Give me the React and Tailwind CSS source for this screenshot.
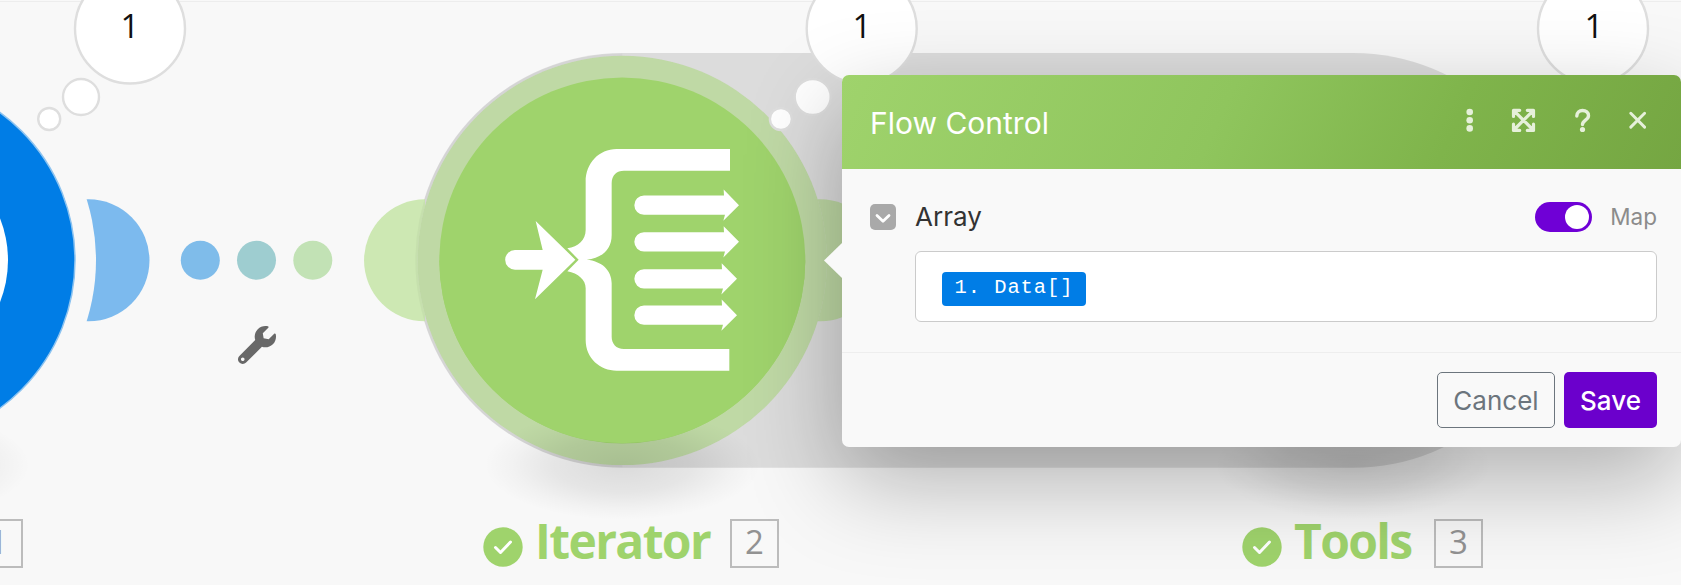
import { FaWrench } from 'react-icons/fa';

const GREEN = '#9fd36c';

function ThoughtBubble({ x }) {
  return (
    <g fill="#fff" stroke="#dedede" strokeWidth="2.4">
      <circle cx={x} cy="28.5" r="55" />
      <circle cx={x - 49} cy="97" r="18" />
      <circle cx={x - 80.8} cy="119" r="11" />
    </g>
  );
}

function SmallArrow({ y, dx }) {
  return (
    <path
      d={`M492 ${y - 29}H${732 + dx}L${731 + dx} ${y - 47}L${777 + dx} ${y}L${730 + dx} ${y + 47}L${735 + dx} ${y + 29}H492a29 29 0 0 1 0-58z`}
    />
  );
}

function Canvas() {
  return (
    <svg className="absolute inset-0" width="1681" height="585" viewBox="0 0 1681 585">
      <defs>
        <radialGradient id="soft">
          <stop offset="0" stopColor="#000" stopOpacity="0.12" />
          <stop offset="0.5" stopColor="#000" stopOpacity="0.075" />
          <stop offset="0.8" stopColor="#000" stopOpacity="0.025" />
          <stop offset="1" stopColor="#000" stopOpacity="0" />
        </radialGradient>
      </defs>
      <rect y="1" width="1681" height="1" fill="#ededed" />

      <circle cx="88.5" cy="260.3" r="61" fill="#7cbaee" />
      <circle cx="-108" cy="260.3" r="204" fill="#f8f8f8" />
      <circle cx="-108" cy="260.3" r="183" fill="#007de6" stroke="#8cc3f0" strokeWidth="1.5" />
      <circle cx="-106" cy="260.3" r="114" fill="#fff" />

      <circle cx="200.3" cy="260.3" r="19.5" fill="#7fbcea" />
      <circle cx="256.5" cy="260.3" r="19.5" fill="#9ecdd0" />
      <circle cx="312.8" cy="260.3" r="19.5" fill="#c2e2b5" />

      <rect x="415" y="53" width="1146" height="414.7" rx="207.3" fill="#000" fillOpacity="0.11" />
      <path d="M425 199.300a61 61 0 0 0 0 122z" fill="#cde8b3" />
      <path d="M622.300 53.400a207 207 0 0 0 0 414z" fill="#000" fillOpacity="0.03" />
      <circle cx="820" cy="260.3" r="61" fill={GREEN} fillOpacity="0.5" />
      <circle cx="622.3" cy="260.4" r="204.700" fill="#dedede" />
      <circle cx="622.3" cy="260.4" r="204.700" fill={GREEN} fillOpacity="0.5" />
      <circle cx="622.3" cy="260.4" r="183" fill={GREEN} />

      <ellipse cx="-108" cy="465" rx="138" ry="55" fill="url(#soft)" />
      <ellipse cx="622.3" cy="465" rx="138" ry="55" fill="url(#soft)" />
      <ellipse cx="1353" cy="465" rx="138" ry="55" fill="url(#soft)" />
      <path d="M439.300 260.400a183 183 0 0 0 366 0z" fill={GREEN} />

      <g transform="translate(480 130) scale(.33333)" fill="#fff">
        <path d="M750 57H410C357 57 317 100 317 155V300C317 330 295 350 262 355L296 389L262 424C295 430 317 450 317 475V630C317 685 360 722 410 722H748V657H432C408 657 395 640 395 620V460C395 420 365 393 320 389C365 384 395 360 395 315V160C395 135 410 122 432 122H750z" />
        <path d="M105 360H188L167 273L286 389L165 508L188 419H105a29.500 29.500 0 0 1 0-59z" />
        <SmallArrow y={225.5} dx={0} />
        <SmallArrow y={335.5} dx={0} />
        <SmallArrow y={446.5} dx={-6} />
        <SmallArrow y={555.5} dx={-6} />
      </g>

      <ThoughtBubble x={130} />
      <ThoughtBubble x={861.7} />
      <ThoughtBubble x={1593} />
    </svg>
  );
}

function NodeLabel({ name, id, className }) {
  return (
    <div className={'absolute top-[519px] flex h-12 items-center whitespace-nowrap ' + className}>
      <svg className="mt-2 shrink-0" width="40" height="40" viewBox="0 0 40 40" fill="none">
        <circle cx="20" cy="20" r="19.700" fill={GREEN} />
        <path d="M12.500 20.500l5 5 10-10.500" stroke="#fff" strokeWidth="3" strokeLinecap="round" strokeLinejoin="round" />
      </svg>
      <span className="mb-[5px] ml-[12px] flex-1 font-['Open_Sans',sans-serif] text-[48px] leading-[48px] font-bold tracking-[-1.65px] text-[#9fd36c]">
        {name}
      </span>
      <IdBadge id={id} />
    </div>
  );
}

function IdBadge({ id }) {
  return (
    <span className="flex h-[49px] w-[49px] shrink-0 items-center justify-center border-2 border-[#bcbcbc] pb-1 font-['Open_Sans',sans-serif] text-[33px] leading-none text-[#929292]">
      {id}
    </span>
  );
}

function HeaderIcons() {
  return (
    <svg width="180" height="26" viewBox="1466 107 180 26" fill="none" stroke="#e6f0da" strokeLinecap="round" strokeLinejoin="round">
      <g fill="#e6f0da" stroke="none">
        <circle cx="1469.700" cy="112" r="3.300" />
        <circle cx="1469.700" cy="120.200" r="3.300" />
        <circle cx="1469.700" cy="128.400" r="3.300" />
        <circle cx="1582.500" cy="129.500" r="2.600" />
      </g>
      <path
        d="M1513.500 116.500v-6.200h6.200M1527.300 110.300h6.200v6.200M1533.500 124.200v6.200h-6.200M1519.700 130.400h-6.200v-6.200M1513.800 110.600l19.400 19.400M1533.200 110.600l-19.400 19.400"
        strokeWidth="3.200"
      />
      <path d="M1576.800 116c0-3.600 2.500-5.500 5.700-5.500 3.400 0 6 2 6 5.200 0 4.300-6 4.500-6 8.800" strokeWidth="3.400" />
      <path d="M1630.800 113.300l13.800 13.800M1644.600 113.300l-13.800 13.800" strokeWidth="2.900" />
    </svg>
  );
}

function Dialog() {
  return (
    <section className="absolute top-[75px] left-[842px] w-[839px] rounded-[7px] bg-[#f9f9f9] font-['Inter',sans-serif] shadow-[0_34px_95px_rgba(0,0,0,0.29)]">
      <svg className="absolute top-[167px] -left-[18px]" width="19" height="37" viewBox="0 0 19 37">
        <path d="M19 0v37L0 18.500z" fill="#f9f9f9" />
      </svg>
      <header className="flex h-[94px] items-center justify-between rounded-t-[7px] bg-linear-[115deg,#9fd36c,#8fc55d_45%,#7fb44b_72%,#75a642] pr-[35px] pb-1 pl-[28px]">
        <h1 className="mt-[5px] text-[30px] leading-none text-white">Flow Control</h1>
        <HeaderIcons />
      </header>
      <div className="flex h-[183px] flex-col pt-[33px] pr-6 pl-7">
        <div className="flex h-[30px] items-center">
          <svg width="26" height="26" viewBox="0 0 26 26" fill="none">
            <rect width="26" height="26" rx="5" fill="#a9a9a9" />
            <path d="M7 11.500l6 5.800 6-5.800" stroke="#fff" strokeWidth="2.800" strokeLinecap="round" strokeLinejoin="round" />
          </svg>
          <span className="ml-[19px] text-[26px] leading-none text-[#333]">Array</span>
          <span className="ml-auto flex h-[30px] w-[57px] items-center justify-end rounded-full bg-[#6f00d6] pr-[3px]">
            <span className="size-6 rounded-full bg-white" />
          </span>
          <span className="ml-[18px] text-[22.500px] leading-none text-[#8c8c8c]">Map</span>
        </div>
        <div className="mt-[19px] ml-[45px] flex h-[71px] items-center rounded-[6px] border border-[#cbcbcb] bg-white pt-[5px] pl-[26px]">
          <span className="flex h-[34px] w-[144px] items-center justify-center rounded-[4px] bg-[#007de6] pb-px font-['Liberation_Mono',monospace] text-[20.500px] leading-none tracking-[0.9px] whitespace-pre text-white">
            1. Data[]
          </span>
        </div>
      </div>
      <footer className="flex h-[95px] justify-end gap-[9px] border-t border-[#eeeeee] pt-[19px] pr-6">
        <button className="h-14 w-[118px] rounded-[5px] border border-[#6c757d] pt-0.5 text-[26px] leading-none text-[#6c757d]">Cancel</button>
        <button className="h-14 w-[93px] rounded-[5px] bg-[#6b00cc] pt-0.5 text-[26px] leading-none font-medium text-white">Save</button>
      </footer>
    </section>
  );
}

function Count({ className }) {
  return (
    <span className={"absolute top-[9px] w-10 text-center font-['Open_Sans',sans-serif] text-[33px] leading-[34px] text-[#111] " + className}>1</span>
  );
}

export default function App() {
  return (
    <main className="relative h-[585px] w-[1681px] overflow-hidden bg-[#f8f8f8]">
      <Canvas />
      <Count className="left-[110px]" />
      <Count className="left-[842px]" />
      <Count className="left-[1574px]" />
      <FaWrench className="absolute top-[326px] left-[238px] size-[38px] text-[#686868]" />
      <div className="absolute top-[519px] -left-[26px] flex">
        <IdBadge id="1" />
      </div>
      <NodeLabel name="Iterator" id="2" className="left-[483px] w-[296px]" />
      <NodeLabel name="Tools" id="3" className="left-[1242px] w-[241px]" />
      <Dialog />
    </main>
  );
}
